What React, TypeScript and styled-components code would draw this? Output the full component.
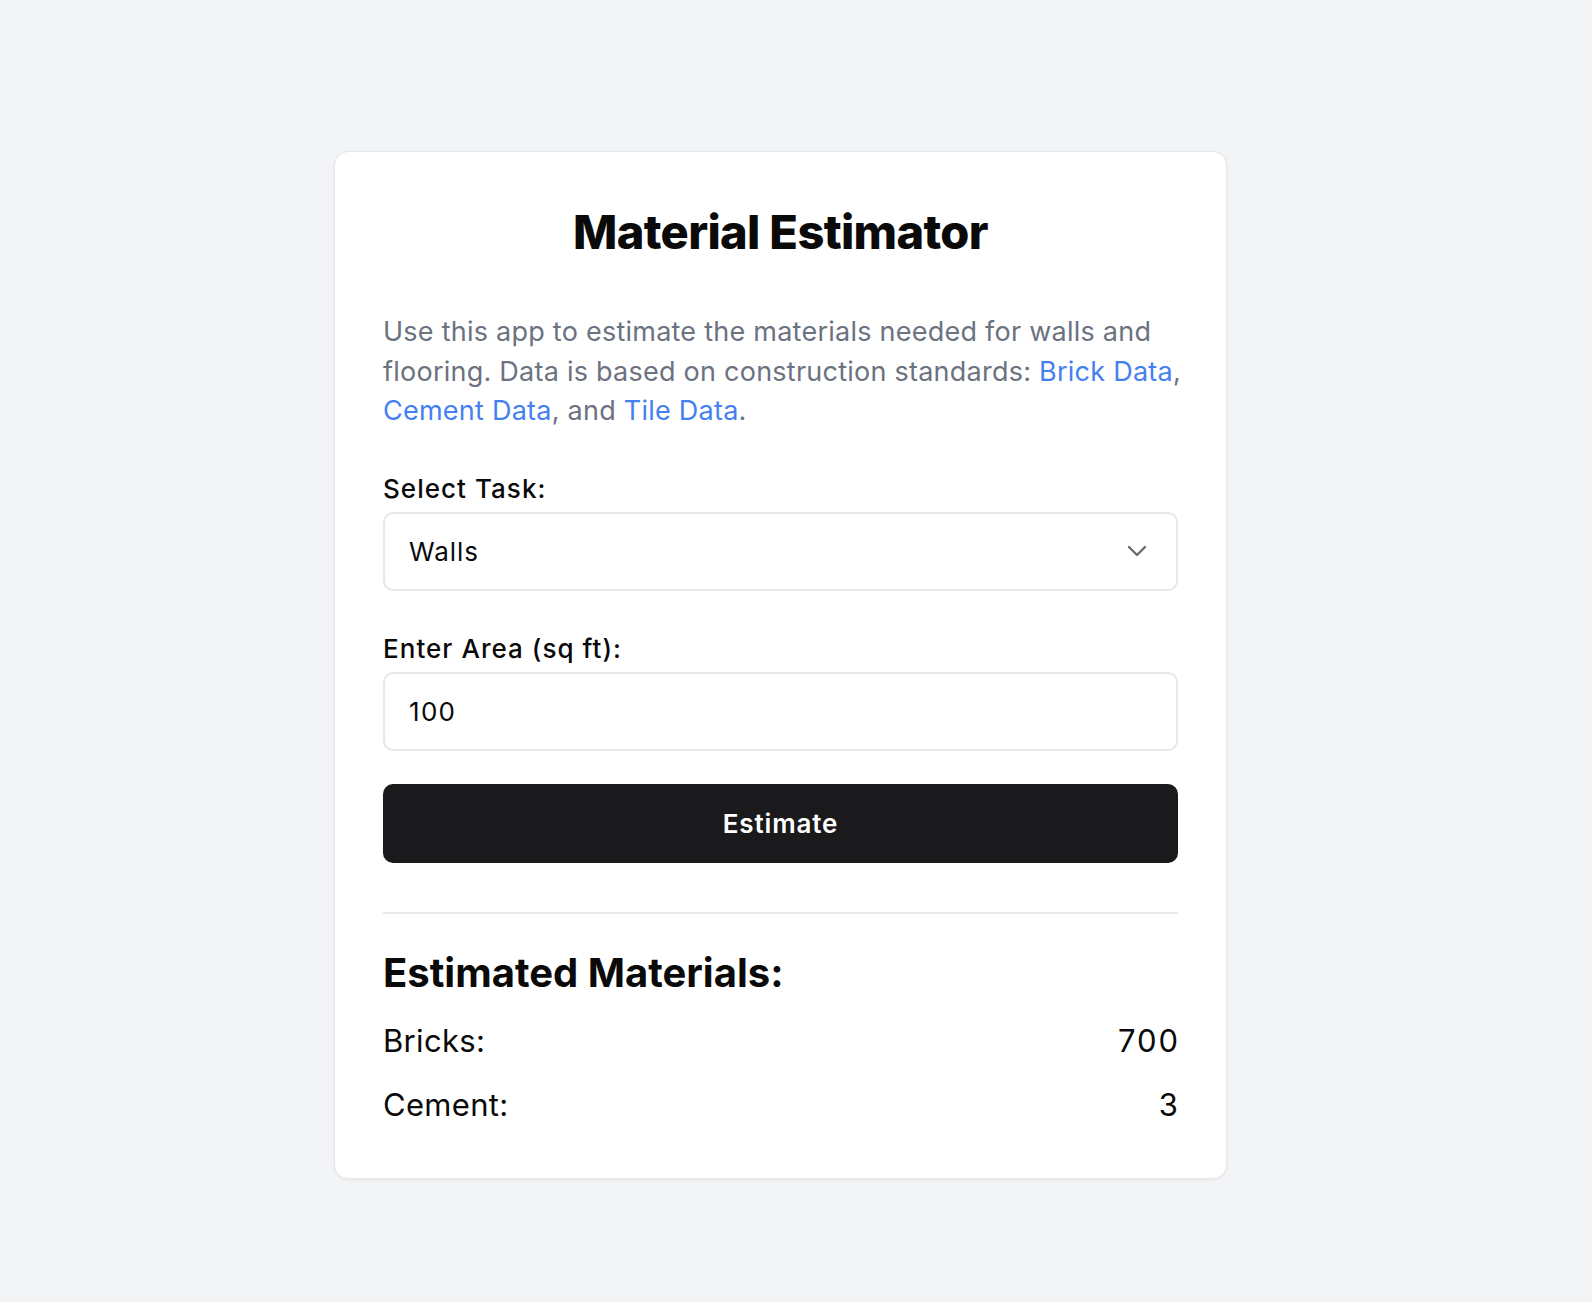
import React, { useState } from "react";
import styled, { createGlobalStyle } from "styled-components";

const Global = createGlobalStyle`
  html, body {
    margin: 0;
    padding: 0;
    background: #f3f4f6;
    font-family: Inter, "Noto Sans", "DejaVu Sans", sans-serif;
    color: #0a0a0a;
  }
  * { box-sizing: border-box; }
`;

const Page = styled.div`
  min-height: 1302px;
  padding: 151px 0 0 334px;
`;

const Card = styled.div`
  width: 893px;
  background: #ffffff;
  border: 1px solid #e5e7eb;
  border-radius: 14px;
  box-shadow: 0 1px 3px rgba(0, 0, 0, 0.06);
  padding: 53px 48px 55px 48px;
  display: flex;
  flex-direction: column;
`;

const Title = styled.h1`
  margin: 0;
  font-size: 47px;
  line-height: 54px;
  font-weight: 800;
  letter-spacing: -0.014em;
  text-align: center;
  color: #0a0a0a;
`;

const Description = styled.p`
  margin: 53px -14px 0 0;
  font-size: 27px;
  line-height: 39.5px;
  letter-spacing: 0.009em;
  color: #6b7280;
`;

const Link = styled.a`
  color: #4580f0;
  text-decoration: none;
`;

const Label = styled.label`
  display: block;
  margin: 43px 0 8px 0;
  font-size: 26px;
  line-height: 30px;
  font-weight: 500;
  letter-spacing: 0.04em;
  color: #0a0a0a;
`;

const SelectWrap = styled.div`
  position: relative;
  height: 79px;
`;

const Select = styled.select`
  appearance: none;
  width: 100%;
  height: 100%;
  border: 2px solid #e5e7eb;
  border-radius: 10px;
  background: #ffffff;
  padding: 0 24px;
  font-family: inherit;
  font-size: 26px;
  letter-spacing: 0.035em;
  color: #0a0a0a;
  outline: none;
`;

const Chevron = styled.svg`
  position: absolute;
  right: 31px;
  top: 50%;
  transform: translateY(-50%);
  pointer-events: none;
`;

const Input = styled.input`
  width: 100%;
  height: 79px;
  border: 2px solid #e5e7eb;
  border-radius: 10px;
  background: #ffffff;
  padding: 0 24px;
  font-family: inherit;
  font-size: 26px;
  letter-spacing: 0.05em;
  color: #0a0a0a;
  outline: none;
`;

const Button = styled.button`
  margin-top: 33px;
  width: 100%;
  height: 79px;
  border: none;
  border-radius: 10px;
  background: #1a1a1c;
  color: #ffffff;
  font-family: inherit;
  font-size: 26px;
  font-weight: 600;
  letter-spacing: 0.033em;
  cursor: pointer;
`;

const Divider = styled.hr`
  margin: 49px 0 0 0;
  border: none;
  height: 2px;
  background: #e8e8ec;
`;

const ResultsTitle = styled.h2`
  margin: 35px 0 0 0;
  font-size: 40px;
  line-height: 48px;
  font-weight: 700;
  letter-spacing: 0;
  color: #0a0a0a;
`;

const Rows = styled.div`
  margin-top: 26px;
  display: flex;
  flex-direction: column;
  gap: 28px;
`;

const Row = styled.div`
  display: flex;
  justify-content: space-between;
  align-items: center;
  font-size: 31px;
  line-height: 36px;
  letter-spacing: 0.01em;
  color: #0a0a0a;
`;

const Value = styled.span`
  letter-spacing: 0.06em;
  margin-right: -0.06em;
`;

export default function App() {
  const [task, setTask] = useState("walls");
  const [area, setArea] = useState("100");
  return (
    <>
      <Global />
      <Page>
        <Card>
          <Title>Material Estimator</Title>
          <Description>
            Use this app to estimate the materials needed for walls and flooring. Data is based on
            construction standards: <Link href="#">Brick Data</Link>,{" "}
            <Link href="#">Cement Data</Link>, and <Link href="#">Tile Data</Link>.
          </Description>
          <Label htmlFor="task">Select Task:</Label>
          <SelectWrap>
            <Select id="task" value={task} onChange={(e) => setTask(e.target.value)}>
              <option value="walls">Walls</option>
              <option value="flooring">Flooring</option>
            </Select>
            <Chevron width="20" height="12" viewBox="0 0 20 12" fill="none">
              <path d="M2 2l8 8 8-8" stroke="#6b6b6b" strokeWidth="2.4" strokeLinecap="round" strokeLinejoin="round" />
            </Chevron>
          </SelectWrap>
          <Label htmlFor="area">Enter Area (sq ft):</Label>
          <Input id="area" value={area} onChange={(e) => setArea(e.target.value)} />
          <Button>Estimate</Button>
          <Divider />
          <ResultsTitle>Estimated Materials:</ResultsTitle>
          <Rows>
            <Row>
              <span>Bricks:</span>
              <Value>700</Value>
            </Row>
            <Row>
              <span>Cement:</span>
              <Value>3</Value>
            </Row>
          </Rows>
        </Card>
      </Page>
    </>
  );
}
